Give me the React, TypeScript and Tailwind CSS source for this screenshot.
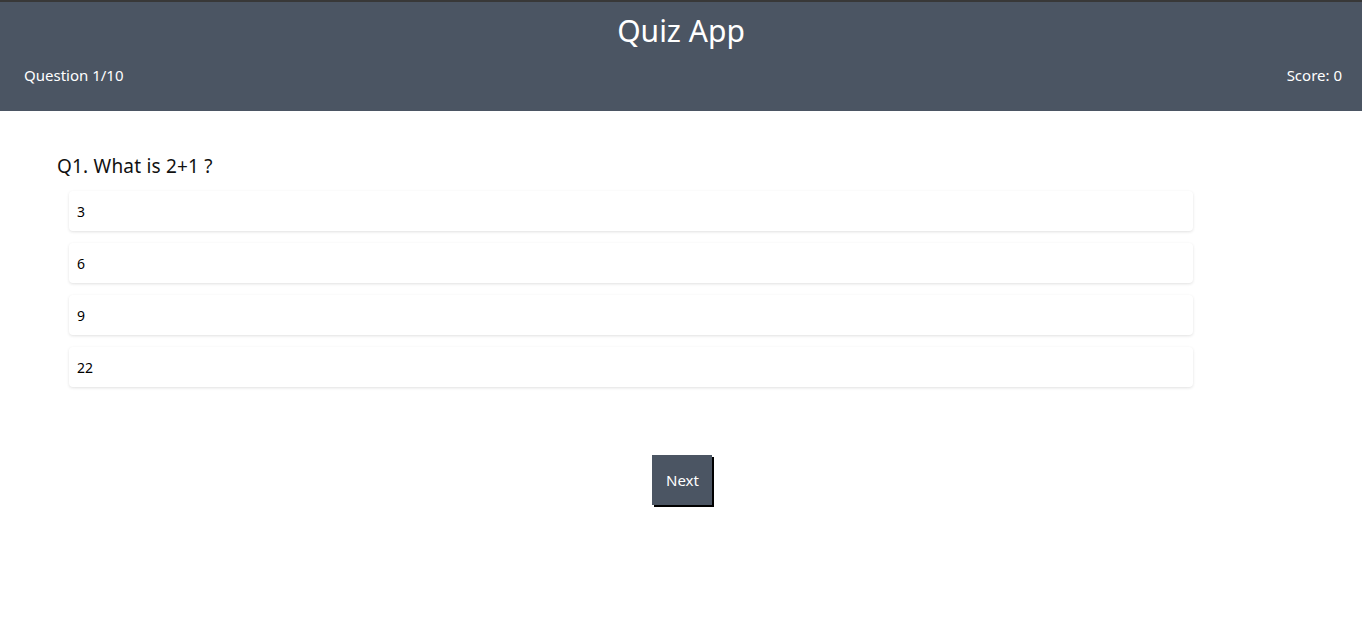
import React from 'react';

const options = ['3', '6', '9', '22'];

const App = () => {
    return (
        <div className="min-h-screen bg-white font-['Noto_Sans','Open_Sans',sans-serif]">
            <header className="bg-[#4b5563] border-t-2 border-[#383838] text-white pb-[26px]">
                <h1 className="text-center text-[30px] leading-[36px] pt-[11px]">Quiz App</h1>
                <div className="flex justify-between px-[24px] mt-[16px] pr-[20px] text-[15px] leading-[20px]">
                    <span>Question 1/10</span>
                    <span>Score: 0</span>
                </div>
            </header>

            <main className="pt-[43px] pl-[57px]">
                <p className="text-[19px] leading-[24px] text-[#111] tracking-[0.2px]">Q1. What is 2+1 ?</p>
                <div className="ml-[12px] mt-[13px] w-[1124px] flex flex-col gap-[12px]">
                    {options.map((o) => (
                        <div
                            key={o}
                            className="h-[40px] flex items-center px-[8px] text-[14px] text-black bg-white rounded-[4px] shadow-[0_1px_3px_rgba(0,0,0,0.12)]"
                        >
                            {o}
                        </div>
                    ))}
                </div>
            </main>

            <div className="flex justify-center mt-[68px] pl-[1px]">
                <button className="w-[60px] h-[50px] bg-[#4b5563] text-white text-[15px] pl-[2px] shadow-[2px_2px_0_#000]">
                    Next
                </button>
            </div>
        </div>
    );
};

export default App;
